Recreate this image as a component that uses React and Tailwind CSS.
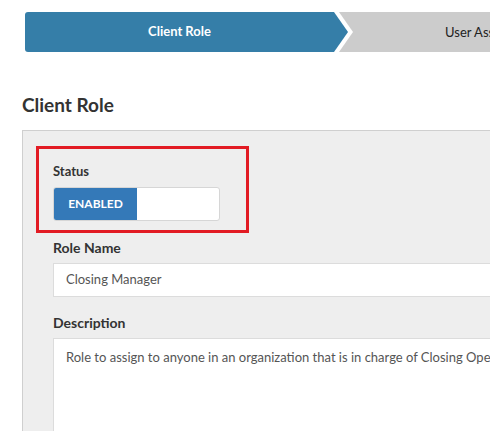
export default function App() {
  return (
    <div className="w-[490px] h-[431px] overflow-hidden bg-white relative" style={{ fontFamily: "Lato, 'Open Sans', sans-serif" }}>
      <div className="absolute left-[25px] top-[12px] w-[520px] h-[40px] bg-[#cccccc] rounded-l-[3px]">
        <div className="absolute left-0 top-0 h-[40px] w-[328px] bg-white [clip-path:polygon(0_0,calc(100%-14px)_0,100%_50%,calc(100%-14px)_100%,0_100%)]" />
        <div className="absolute left-0 top-0 h-[40px] w-[323px] bg-[#357ea8] rounded-l-[3px] [clip-path:polygon(0_0,calc(100%-14px)_0,100%_50%,calc(100%-14px)_100%,0_100%)] flex items-center justify-center pr-[14px]">
          <span className="text-white font-bold text-[13px]">Client Role</span>
        </div>
        <span className="absolute left-[420px] top-[11px] text-[13px] text-[#222] whitespace-nowrap">User Assignment</span>
      </div>
      <div className="pt-[92px] pl-[22px]">
        <h2 className="text-[19px] font-bold text-[#333] leading-[26px]">Client Role</h2>
        <div className="mt-[12px] bg-[#eeeeee] border border-[#cfcfcf] w-[520px] h-[320px] pl-[30px] pt-[31px]">
          <div className="relative">
            <div className="absolute left-[-17px] top-[-16px] w-[213px] h-[87px] border-[3px] border-[#e21b23]" />
            <div className="text-[13px] font-bold text-[#333]">Status</div>
            <div className="mt-[5px] w-[167px] h-[34px] bg-white border border-[#d6d6d6] rounded-[3px] flex overflow-hidden">
              <div className="w-[83px] bg-[#3479b8] text-white font-bold text-[12px] flex items-center justify-center">ENABLED</div>
            </div>
            <div className="mt-[16px] text-[14px] font-bold text-[#333]">Role Name</div>
            <div className="mt-[5px] h-[34px] bg-white border border-[#dcdcdc] text-[13px] text-[#555] flex items-center pl-[12px]">Closing Manager</div>
            <div className="mt-[15px] text-[14px] font-bold text-[#333]">Description</div>
            <div className="mt-[5px] h-[120px] bg-white border border-[#dcdcdc] text-[13px] text-[#555] pl-[12px] pt-[9px] whitespace-nowrap">Role to assign to anyone in an organization that is in charge of Closing Operations</div>
          </div>
        </div>
      </div>
    </div>
  );
}
